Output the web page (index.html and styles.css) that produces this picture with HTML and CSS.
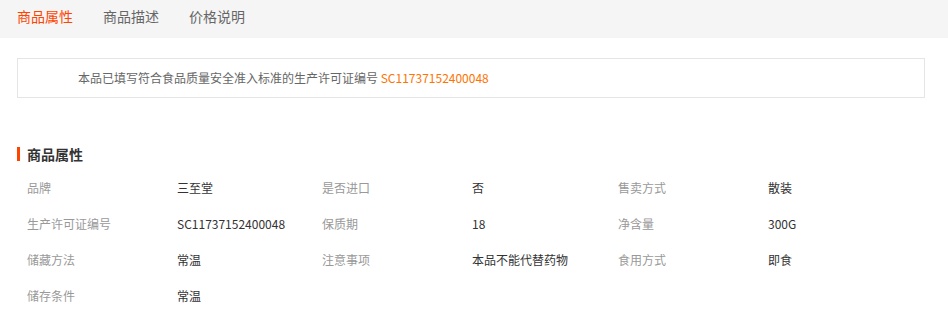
FILE: index.html
```html
<!DOCTYPE html>
<html lang="zh-CN">
<head>
    <meta charset="UTF-8">
    <title>商品属性</title>
    <link rel="stylesheet" href="styles.css">
</head>
<body>

<div class="tabs">
    <span class="tab active">商品属性</span>
    <span class="tab">商品描述</span>
    <span class="tab">价格说明</span>
</div>

<div class="content">
    <div class="notice">
        本品已填写符合食品质量安全准入标准的生产许可证编号 <span class="code">SC11737152400048</span>
    </div>

    <h3 class="title">商品属性</h3>

    <div class="attrs">
        <span class="label">品牌</span><span class="value">三至堂</span>
        <span class="label">是否进口</span><span class="value">否</span>
        <span class="label">售卖方式</span><span class="value">散装</span>

        <span class="label">生产许可证编号</span><span class="value">SC11737152400048</span>
        <span class="label">保质期</span><span class="value">18</span>
        <span class="label">净含量</span><span class="value">300G</span>

        <span class="label">储藏方法</span><span class="value">常温</span>
        <span class="label">注意事项</span><span class="value">本品不能代替药物</span>
        <span class="label">食用方式</span><span class="value">即食</span>

        <span class="label">储存条件</span><span class="value">常温</span>
    </div>
</div>

</body>
</html>
```

FILE: styles.css
```css
body {
    margin: 0;
    font-family: "Noto Sans CJK SC", "Liberation Sans", sans-serif;
    font-size: 12px;
    color: #333;
    background-color: #fff;
}
.tabs {
    height: 38px;
    background-color: #f5f5f5;
    padding-left: 17px;
    display: flex;
    gap: 30px;
}
.tab {
    font-size: 14px;
    line-height: 33px;
    color: #666;
}
.tab.active {
    color: #ff4400;
}
.content {
    padding: 20px 23px 0 17px;
}
.notice {
    border: 1px solid #e5e5e5;
    height: 38px;
    line-height: 38px;
    padding-left: 60px;
    color: #666;
}
.notice .code {
    color: #ff7300;
}
.title {
    margin: 46px 0 5px;
    font-size: 14px;
    line-height: 20px;
    font-weight: bold;
    color: #333;
    padding-left: 10px;
    position: relative;
}
.title::before {
    content: "";
    position: absolute;
    left: 0;
    top: 3px;
    width: 3px;
    height: 14px;
    background-color: #ff4400;
}
.attrs {
    display: grid;
    grid-template-columns: 150px 145px 150px 146px 150px 1fr;
    grid-auto-rows: 36px;
    align-items: center;
    padding-left: 10px;
}
.label {
    color: #999;
}
.value {
    color: #333;
}
```
